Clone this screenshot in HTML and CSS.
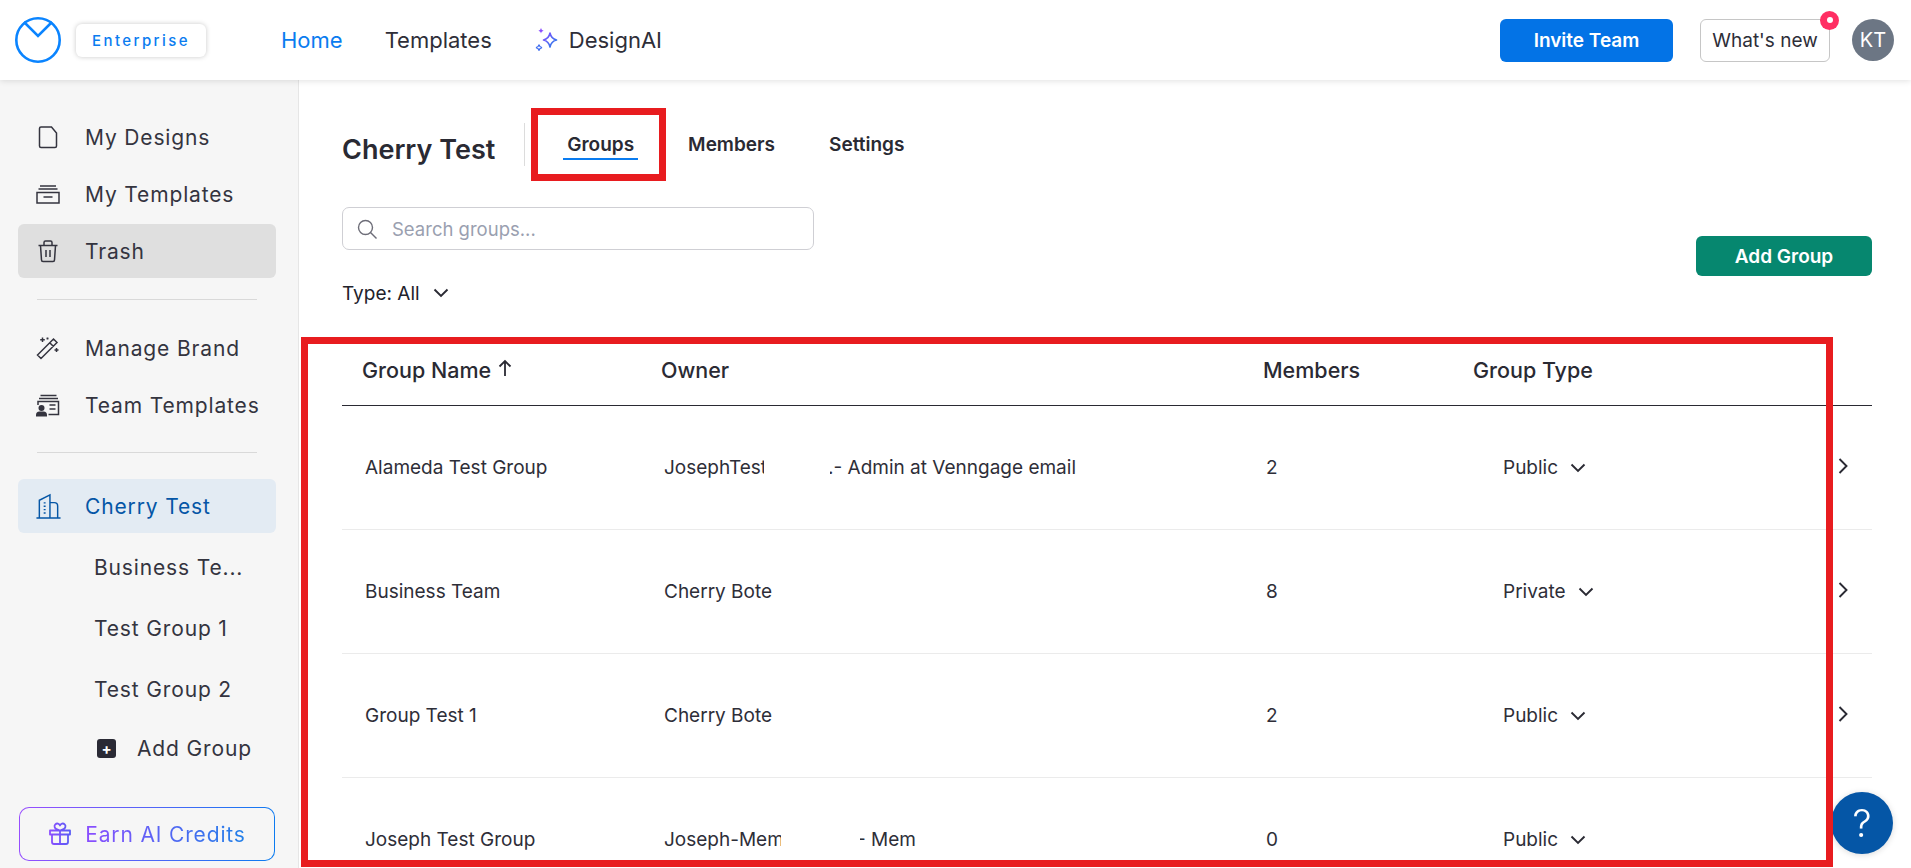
FILE: index.html
```html
<!DOCTYPE html>
<html lang="en">
<head>
<meta charset="utf-8">
<title>Cherry Test - Groups</title>
<link rel="stylesheet" href="styles.css">
</head>
<body>
<header class="topbar">
  <svg class="logo" viewBox="0 0 46 46" aria-hidden="true"><circle cx="23" cy="23" r="21.700" fill="none" stroke="#0a84ff" stroke-width="2.600"/><path d="M9 5 23 19 37 5" fill="none" stroke="#0a84ff" stroke-width="2.600"/></svg>
  <span class="plan-chip">Enterprise</span>
  <nav class="topnav">
    <a class="topnav-link is-current">Home</a>
    <a class="topnav-link">Templates</a>
    <a class="topnav-link topnav-ai">
      <svg class="spark" viewBox="0 0 26 26" aria-hidden="true"><defs><linearGradient id="sg" x1="0" y1="0" x2="1" y2="1"><stop offset="0" stop-color="#8b4dff"/><stop offset="1" stop-color="#1f7fe8"/></linearGradient></defs><path d="M16 6c.8 4 2.500 6 6.500 7-4 1-5.700 3-6.500 7-.8-4-2.500-6-6.500-7 4-1 5.700-3 6.500-7Z" fill="none" stroke="url(#sg)" stroke-width="1.600" stroke-linejoin="round"/><path d="M7 .8c.3 1.700 1 2.500 2.600 2.900C8 4.100 7.300 4.900 7 6.600 6.700 4.900 6 4.100 4.400 3.700 6 3.300 6.700 2.500 7 .8Z" fill="#8b4dff"/><path d="M5 17.500c.3 1.900 1.100 2.700 3 3.100-1.900.4-2.700 1.200-3 3.100-.3-1.900-1.100-2.700-3-3.100 1.900-.4 2.700-1.200 3-3.100Z" fill="none" stroke="#3d6cf0" stroke-width="1.300"/></svg>
      DesignAI
    </a>
  </nav>
  <div class="topbar-actions">
    <button class="btn-invite">Invite Team</button>
    <button class="btn-new">What's new<span class="new-dot"></span></button>
    <span class="avatar">KT</span>
  </div>
</header>

<div class="shell">
  <aside class="sidebar">
    <ul class="side-group">
      <li class="side-item">
        <svg class="side-icon" viewBox="0 0 24 24" aria-hidden="true"><path d="M3.500 3.500A1.500 1.500 0 0 1 5 2h10.500L20.500 8v13A1.500 1.500 0 0 1 19 22.500H5A1.500 1.500 0 0 1 3.500 21Z"/></svg>
        My Designs</li>
      <li class="side-item">
        <svg class="side-icon" viewBox="0 0 24 24" aria-hidden="true"><path d="M4 4h16M2.500 7h19M1 10.500h22v10.500H1ZM7.500 15h9"/></svg>
        My Templates</li>
      <li class="side-item is-selected">
        <svg class="side-icon" viewBox="0 0 24 24" aria-hidden="true"><path d="M2.500 6.500h19M8 6.500V3.500A1.500 1.500 0 0 1 9.500 2h5A1.500 1.500 0 0 1 16 3.500v3M4.500 6.500l1 14.500A1.500 1.500 0 0 0 7 22.500h10a1.500 1.500 0 0 0 1.500-1.500l1-14.500M10 11v7M14 11v7"/></svg>
        Trash</li>
    </ul>
    <hr class="side-rule">
    <ul class="side-group">
      <li class="side-item">
        <svg class="side-icon" viewBox="0 0 24 24" aria-hidden="true"><path d="M1.500 19 17.500 3l3.500 3.500-16 16ZM14 7l3.500 3.500M6.500 1.500v4.500M4.200 3.800h4.600M20.500 12v4M18.500 14h4M11.500 1.500v2M10.500 2.500h2"/></svg>
        Manage Brand</li>
      <li class="side-item">
        <svg class="side-icon" viewBox="0 0 24 24" aria-hidden="true"><path d="M4.500 2.500h16M3 5.500h19M2 12V8.500h20.500v13H12.500M13.500 12h6M13.500 16h6"/><circle cx="5.500" cy="15" r="3" class="fill-ink"/><path d="M0 23.500V22a3.500 3.500 0 0 1 3.500-3.500h4A3.500 3.500 0 0 1 11 22v1.500Z" class="fill-ink"/></svg>
        Team Templates</li>
    </ul>
    <hr class="side-rule">
    <ul class="side-group">
      <li class="side-item is-team">
        <svg class="side-icon side-icon-team" viewBox="0 0 28 28" aria-hidden="true"><path d="M1.500 26h25M4.500 26V7.500L15.500 2v24M15.500 10h4.500a3.500 3.500 0 0 1 3.500 3.500V26"/><path d="M10 9.500v1.500M10 13v1.500M10 16.500V18M10 20v1.500" stroke-width="2"/></svg>
        Cherry Test</li>
      <li class="side-sub side-first">Business Te...</li>
      <li class="side-sub">Test Group 1</li>
      <li class="side-sub">Test Group 2</li>
      <li class="side-sub side-add"><span class="add-box">+</span>Add Group</li>
    </ul>
    <button class="earn">
      <svg class="earn-icon" viewBox="0 0 24 24" aria-hidden="true"><defs><linearGradient id="gg" x1="0" y1="0" x2="1" y2="0"><stop offset="0" stop-color="#8b4dff"/><stop offset="1" stop-color="#5a5cf5"/></linearGradient></defs><path d="M2 8.500h20v4H2ZM4 12.500V20a2 2 0 0 0 2 2h12a2 2 0 0 0 2-2v-7.500M12 8.500V22M12 8.500 8.500 7A2.800 2.800 0 1 1 12 3.500a2.800 2.800 0 1 1 3.500 3.500Z" fill="none" stroke="url(#gg)" stroke-width="1.800" stroke-linejoin="round"/></svg>
      <span class="earn-label">Earn AI Credits</span>
    </button>
  </aside>

  <main class="content">
    <div class="title-row">
      <h1 class="page-title">Cherry Test</h1>
      <span class="title-rule"></span>
      <div class="tabs">
        <a class="tab is-active">Groups</a>
        <a class="tab">Members</a>
        <a class="tab">Settings</a>
      </div>
    </div>

    <div class="tools">
      <div class="tools-left">
        <label class="search">
          <svg class="search-icon" viewBox="0 0 20 20" aria-hidden="true"><circle cx="8.500" cy="8.500" r="7"/><path d="m13.500 13.500 6 6"/></svg>
          <span class="search-hint">Search groups...</span>
        </label>
        <div class="type-filter">Type: All
          <svg class="chev" viewBox="0 0 16 10" aria-hidden="true"><path d="m1.500 1.500 6.500 6.500 6.500-6.500"/></svg>
        </div>
      </div>
      <button class="btn-add">Add Group</button>
    </div>

    <div class="table">
      <div class="table-head">
        <span class="head-name">Group Name <svg class="sort" viewBox="0 0 14 18" aria-hidden="true"><path d="M7 17V2M1.500 7.500 7 2l5.500 5.500"/></svg></span>
        <span>Owner</span>
        <span>Members</span>
        <span>Group Type</span>
      </div>

      <div class="table-row">
        <span>Alameda Test Group</span>
        <span class="owner"><span class="owner-a owner-a-1">JosephTest Admin</span><span class="owner-b owner-b-1"><span>.- Admin at Venngage email</span></span></span>
        <span>2</span>
        <span class="type-cell">Public <svg class="chev" viewBox="0 0 16 10" aria-hidden="true"><path d="m1.500 1.500 6.500 6.500 6.500-6.500"/></svg></span>
        <svg class="row-go" viewBox="0 0 10 16" aria-hidden="true"><path d="m1.500 1 7 7-7 7"/></svg>
      </div>
      <div class="table-row">
        <span>Business Team</span>
        <span class="owner"><span class="owner-a">Cherry Bote</span></span>
        <span>8</span>
        <span class="type-cell">Private <svg class="chev" viewBox="0 0 16 10" aria-hidden="true"><path d="m1.500 1.500 6.500 6.500 6.500-6.500"/></svg></span>
        <svg class="row-go" viewBox="0 0 10 16" aria-hidden="true"><path d="m1.500 1 7 7-7 7"/></svg>
      </div>
      <div class="table-row">
        <span>Group Test 1</span>
        <span class="owner"><span class="owner-a">Cherry Bote</span></span>
        <span>2</span>
        <span class="type-cell">Public <svg class="chev" viewBox="0 0 16 10" aria-hidden="true"><path d="m1.500 1.500 6.500 6.500 6.500-6.500"/></svg></span>
        <svg class="row-go" viewBox="0 0 10 16" aria-hidden="true"><path d="m1.500 1 7 7-7 7"/></svg>
      </div>
      <div class="table-row">
        <span>Joseph Test Group</span>
        <span class="owner"><span class="owner-a owner-a-4">Joseph-Member</span><span class="owner-b owner-b-4"><span>- Mem</span></span></span>
        <span>0</span>
        <span class="type-cell">Public <svg class="chev" viewBox="0 0 16 10" aria-hidden="true"><path d="m1.500 1.500 6.500 6.500 6.500-6.500"/></svg></span>
      </div>
    </div>
  </main>
</div>

<button class="help">?</button>
<div class="mark mark-tab"></div>
<div class="mark mark-table"></div>
</body>
</html>
```

FILE: styles.css
```css
* { box-sizing: border-box; }
html, body { margin: 0; height: 100%; }
body {
  height: 868px;
  overflow: hidden;
  background: #fff;
  color: #2e2e38;
  font-family: Inter, "Noto Sans", sans-serif;
  display: flex;
  flex-direction: column;
}
ul { list-style: none; margin: 0; padding: 0; }
button { font-family: inherit; cursor: pointer; }

/* top bar */
.topbar {
  height: 80px;
  flex: none;
  display: flex;
  align-items: center;
  padding: 0 17px 0 15px;
  background: #fff;
  box-shadow: 0 1px 6px rgba(0, 0, 0, .12);
  position: relative;
  z-index: 2;
}
.logo { width: 46px; height: 46px; }
.plan-chip {
  margin-left: 15px;
  width: 130px;
  height: 33px;
  display: flex;
  align-items: center;
  justify-content: center;
  border-radius: 6px;
  background: #fff;
  box-shadow: 0 0 5px rgba(0, 0, 0, .22);
  color: #0a7cf0;
  font-size: 15px;
  font-weight: 500;
  letter-spacing: 2.400px;
}
.topnav { display: flex; align-items: center; margin-left: 75px; gap: 42px; }
.topnav-link { font-size: 22px; color: #2e2e38; }
.topnav-link.is-current { color: #0a7cf0; }
.topnav-ai { display: flex; align-items: center; gap: 9px; }
.spark { width: 26px; height: 26px; }
.topbar-actions { margin-left: auto; display: flex; align-items: center; }
.btn-invite {
  width: 173px;
  height: 43px;
  border: 0;
  border-radius: 6px;
  background: #0373e6;
  color: #fff;
  font-size: 19px;
  font-weight: 600;
}
.btn-new {
  position: relative;
  margin-left: 27px;
  width: 130px;
  height: 43px;
  border: 1px solid #c6c6c6;
  border-radius: 6px;
  background: #fff;
  color: #2e2e38;
  font-size: 19px;
  padding: 0;
}
.new-dot {
  position: absolute;
  top: -9px;
  right: -10px;
  width: 19px;
  height: 19px;
  border-radius: 50%;
  background: #ff2e63;
}
.new-dot::after {
  content: "";
  position: absolute;
  left: 6.500px;
  top: 6.500px;
  width: 6px;
  height: 6px;
  border-radius: 50%;
  background: #fff;
}
.avatar {
  margin-left: 22px;
  width: 42px;
  height: 42px;
  border-radius: 50%;
  background: #6c7684;
  color: #fff;
  font-size: 20px;
  display: flex;
  align-items: center;
  justify-content: center;
}

/* shell */
.shell { flex: 1; min-height: 0; display: flex; }
.sidebar {
  width: 299px;
  flex: none;
  background: #f6f6f6;
  border-right: 1px solid #e6e6e6;
  padding: 30px 22px 7px 18px;
  display: flex;
  flex-direction: column;
}
.side-group { display: flex; flex-direction: column; gap: 3px; }
.side-item {
  height: 54px;
  display: flex;
  align-items: center;
  gap: 25px;
  padding-left: 18px;
  border-radius: 6px;
  font-size: 21px;
  letter-spacing: .85px;
  color: #34343f;
}
.side-item.is-selected { background: #dfdfdf; }
.side-item.is-team { background: #e3ebf3; color: #0556a6; gap: 23px; padding-left: 17px; }
.side-icon {
  width: 24px;
  height: 24px;
  flex: none;
  fill: none;
  stroke: currentColor;
  stroke-width: 1.500;
}
.side-icon-team { width: 27px; height: 27px; }
.fill-ink { fill: currentColor; stroke: none; }
.side-rule {
  width: 220px;
  height: 1px;
  border: 0;
  background: #d9d9d9;
  margin: 21px 0 21px 19px;
  flex: none;
}
.side-rule:nth-of-type(2) { margin: 20px 0 26px 19px; }
.side-sub {
  height: 58px;
  display: flex;
  align-items: center;
  padding-left: 76px;
  font-size: 21px;
  letter-spacing: .85px;
  color: #34343f;
}
.side-first { margin-top: 2px; }
.side-add { gap: 21px; padding-left: 79px; margin-top: -2px; }
.add-box {
  width: 19px;
  height: 19px;
  border-radius: 3px;
  background: #2a2a35;
  color: #fff;
  font-size: 15px;
  font-weight: 700;
  letter-spacing: 0;
  display: flex;
  align-items: center;
  justify-content: center;
}
.earn {
  margin-top: auto;
  margin-left: 1px;
  width: 256px;
  height: 54px;
  border: 1px solid transparent;
  border-radius: 10px;
  background:
    linear-gradient(#f6f6f6, #f6f6f6) padding-box,
    linear-gradient(100deg, #9a4dff, #0a7cf0) border-box;
  display: flex;
  align-items: center;
  justify-content: center;
  gap: 13px;
  font-size: 21px;
  letter-spacing: .85px;
}
.earn-icon { width: 24px; height: 24px; flex: none; }
.earn-label {
  background: linear-gradient(90deg, #8b4dff, #1f7fe8);
  -webkit-background-clip: text;
  background-clip: text;
  color: transparent;
}

/* main */
.content { flex: 1; min-width: 0; overflow: hidden; padding: 43px 39px 0 43px; }
.title-row { height: 43px; display: flex; }
.page-title {
  margin: 5px 0 0;
  font-size: 27px;
  line-height: 43px;
  height: 43px;
  font-weight: 600;
  color: #2a2a33;
  white-space: nowrap;
}
.title-rule { width: 1px; height: 43px; background: #dcdcdc; margin-left: 29px; }
.tabs { display: flex; gap: 46px; margin-left: 38px; }
.tab {
  position: relative;
  padding: 0 4px;
  font-size: 19px;
  font-weight: 600;
  line-height: 43px;
  color: #2a2a33;
}
.tab.is-active::after {
  content: "";
  position: absolute;
  left: 0;
  right: 0;
  top: 35px;
  height: 2px;
  background: #0a7cf0;
}
.tools { display: flex; justify-content: space-between; margin-top: 41px; }
.tools-left { display: flex; flex-direction: column; }
.search {
  width: 472px;
  height: 43px;
  border: 1px solid #cfcfd4;
  border-radius: 7px;
  display: flex;
  align-items: center;
  padding-left: 14px;
  gap: 15px;
}
.search-icon { width: 20px; height: 20px; fill: none; stroke: #6d6d78; stroke-width: 1.400; }
.search-hint { font-size: 18.500px; color: #9a9fb0; }
.type-filter {
  margin-top: 29px;
  height: 28px;
  display: flex;
  align-items: center;
  gap: 13px;
  font-size: 19px;
  color: #22222b;
}
.chev { width: 16px; height: 10px; fill: none; stroke: #2a2a33; stroke-width: 1.900; }
.btn-add {
  width: 176px;
  height: 40px;
  margin-top: 29px;
  border: 0;
  border-radius: 6px;
  background: #06876f;
  color: #fff;
  font-size: 19px;
  font-weight: 600;
}

/* table */
.table { margin-top: 26px; }
.table-head, .table-row {
  display: grid;
  grid-template-columns: 299px 602px 210px 1fr auto;
  align-items: center;
}
.table-head {
  height: 73px;
  padding: 2px 24px 0 20px;
  border-bottom: 1px solid #2a2a33;
  font-size: 21.500px;
  font-weight: 500;
  color: #2a2a33;
}
.head-name { display: flex; align-items: center; gap: 7px; }
.sort { width: 14px; height: 18px; fill: none; stroke: #2a2a33; stroke-width: 1.800; margin-top: -4px; }
.table-row {
  height: 124px;
  padding: 0 24px 0 23px;
  border-bottom: 1px solid #ebebeb;
  font-size: 19px;
  color: #2e2e38;
}
.owner { display: flex; white-space: nowrap; }
.owner-a { display: block; overflow: hidden; }
.owner-a-1 { width: 100px; }
.owner-a-4 { width: 117px; }
.owner-b { display: flex; justify-content: flex-end; overflow: hidden; }
.owner-b-1 { width: 246px; margin-left: 66px; }
.owner-b-4 { width: 56px; margin-left: 79px; }
.owner-b span { flex: none; }
.type-cell { display: flex; align-items: center; gap: 12px; padding-left: 27px; }
.row-go { width: 10px; height: 16px; fill: none; stroke: #2a2a33; stroke-width: 1.900; margin-top: -4px; }

/* overlays */
.help {
  position: fixed;
  left: 1831px;
  top: 792px;
  width: 62px;
  height: 62px;
  border: 0;
  border-radius: 50%;
  background: #0556a6;
  color: #fff;
  font-size: 38px;
  font-weight: 300;
  padding: 0;
  box-shadow: 0 1px 6px rgba(0, 0, 0, .15);
}
.mark { position: fixed; border: 7px solid #e81c1f; pointer-events: none; }
.mark-tab { left: 531px; top: 108px; width: 135px; height: 73px; }
.mark-table { left: 301px; top: 337px; width: 1532px; height: 530px; }
```
